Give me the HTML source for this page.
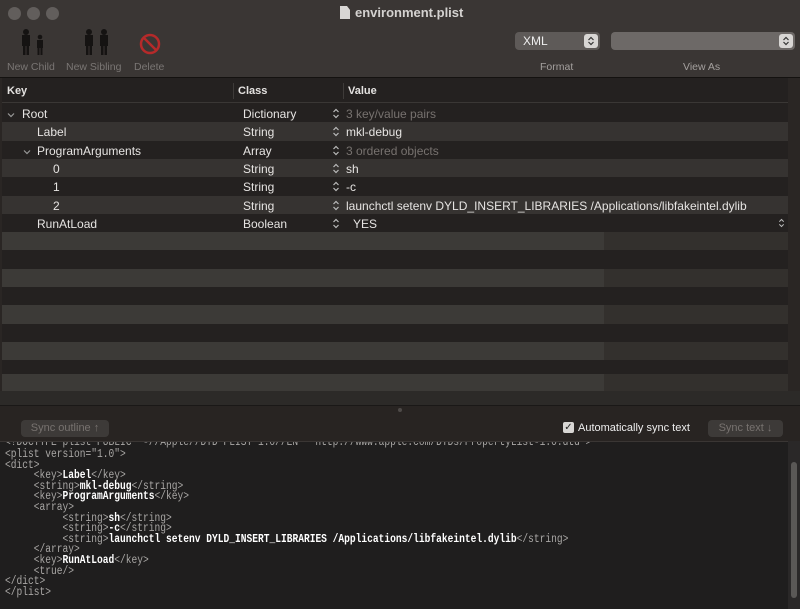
<!DOCTYPE html>
<html><head><meta charset="utf-8"><style>
*{margin:0;padding:0;box-sizing:border-box}
body{width:800px;height:609px;overflow:hidden;background:#2a2624;font-family:"Liberation Sans",sans-serif;color:#e6e4e2;position:relative}
.abs{position:absolute}
.top{left:0;top:0;width:800px;height:78px;background:#3a3634;border-bottom:1px solid #141210}
.dot{width:13px;height:13px;border-radius:50%;background:#625e5c;top:7px}
.lbl{font-size:10.5px;color:#7a7674;top:61px}
.tbl{left:2px;top:78px;width:786px;height:314px;background:#242120}
.hdr{left:2px;top:78px;width:786px;height:25px;background:#242120;border-bottom:1px solid #3a3735;font-size:11px;font-weight:bold;color:#e4e2e0}
.row{position:absolute;left:2px;width:786px;height:18.3px;font-size:12px}
.row span{position:absolute;top:3px}
.light{background:#363331}
.gray{color:#77726f}
.ud{position:absolute;left:330px;top:4px;width:8px;height:11px}
pre{font-family:"Liberation Mono",monospace;font-size:11.5px;line-height:10.6px;color:#a9a7a5;transform:scaleX(0.833);transform-origin:0 0;white-space:pre}
pre b{color:#fff;font-weight:bold}
.btn{background:#3d3a38;border-radius:4px;color:#77726f;font-size:11px;text-align:center;line-height:17px;height:17px}
</style></head><body>
<div class="abs top"></div>
<div class="abs dot" style="left:8px"></div>
<div class="abs dot" style="left:27px"></div>
<div class="abs dot" style="left:46px"></div>
<div class="abs" style="left:340px;top:6px;width:10px;height:13px;background:#d8d6d4;clip-path:polygon(0 0,70% 0,100% 30%,100% 100%,0 100%)"></div>
<div class="abs" style="left:355px;top:5px;font-size:13px;font-weight:bold;color:#d4d2d0">environment.plist</div>
<svg class="abs" style="left:15px;top:28px" width="160" height="32">
<g fill="#151312">
<circle cx="11" cy="4" r="3"/><rect x="7" y="7" width="8" height="11"/><rect x="8" y="17" width="2.5" height="10"/><rect x="11.5" y="17" width="2.5" height="10"/>
<circle cx="25" cy="9" r="2.3"/><rect x="22" y="12" width="6" height="8"/><rect x="22.5" y="19" width="2" height="8"/><rect x="25.5" y="19" width="2" height="8"/>
<circle cx="74" cy="4" r="3"/><rect x="70" y="7" width="8" height="11"/><rect x="71" y="17" width="2.5" height="10"/><rect x="74.5" y="17" width="2.5" height="10"/>
<circle cx="89" cy="4" r="3"/><rect x="85" y="7" width="8" height="11"/><rect x="86" y="17" width="2.5" height="10"/><rect x="89.5" y="17" width="2.5" height="10"/>
</g>
<circle cx="135" cy="16" r="9" fill="none" stroke="#b52a2a" stroke-width="2.5"/>
<line x1="129" y1="10" x2="141" y2="22" stroke="#b52a2a" stroke-width="2.5"/>
</svg>
<div class="abs lbl" style="left:7px">New Child</div>
<div class="abs lbl" style="left:66px">New Sibling</div>
<div class="abs lbl" style="left:134px">Delete</div>
<div class="abs" style="left:515px;top:32px;width:85px;height:18px;background:#5e5a58;border-radius:4px;font-size:12px;color:#eee;padding:2px 8px">XML</div>
<svg class="abs" style="left:584px;top:34px" width="14" height="14"><rect width="14" height="14" rx="3" fill="#d8d6d4"/><path d="M4.5 6 L7 3.5 L9.5 6 M4.5 8 L7 10.5 L9.5 8" fill="none" stroke="#333" stroke-width="1.2"/></svg>
<div class="abs" style="left:611px;top:32px;width:184px;height:18px;background:#6d6967;border-radius:4px"></div>
<svg class="abs" style="left:779px;top:34px" width="14" height="14"><rect width="14" height="14" rx="3" fill="#d8d6d4"/><path d="M4.5 6 L7 3.5 L9.5 6 M4.5 8 L7 10.5 L9.5 8" fill="none" stroke="#333" stroke-width="1.2"/></svg>
<div class="abs lbl" style="left:540px;color:#a4a09e">Format</div>
<div class="abs lbl" style="left:683px;color:#a4a09e">View As</div>

<div class="abs tbl"></div>
<div class="abs hdr">
<span class="abs" style="left:5px;top:7px">Key</span>
<div class="abs" style="left:231px;top:5px;width:1px;height:16px;background:#3e3b39"></div>
<span class="abs" style="left:236px;top:7px">Class</span>
<div class="abs" style="left:341px;top:5px;width:1px;height:16px;background:#3e3b39"></div>
<span class="abs" style="left:346px;top:7px">Value</span>
</div>
<svg width="0" height="0" style="position:absolute"><defs><symbol id="ud" viewBox="0 0 8 11"><path d="M1.5 4 L4 1.5 L6.5 4 M1.5 7 L4 9.5 L6.5 7" fill="none" stroke="#bbb" stroke-width="1.2"/></symbol><symbol id="chev" viewBox="0 0 8 6"><path d="M1 1.5 L4 4.5 L7 1.5" fill="none" stroke="#999" stroke-width="1.2"/></symbol></defs></svg>
<div class="row" style="top:104px"><svg style="position:absolute;left:5px;top:8px" width="8" height="6"><use href="#chev"/></svg><span style="left:20px">Root</span><span style="left:241px">Dictionary</span><svg class="ud"><use href="#ud"/></svg><span class="gray" style="left:344px">3 key/value pairs</span></div>
<div class="row light" style="top:122.3px"><span style="left:35px">Label</span><span style="left:241px">String</span><svg class="ud"><use href="#ud"/></svg><span style="left:344px">mkl-debug</span></div>
<div class="row" style="top:140.6px"><svg style="position:absolute;left:21px;top:8px" width="8" height="6"><use href="#chev"/></svg><span style="left:35px">ProgramArguments</span><span style="left:241px">Array</span><svg class="ud"><use href="#ud"/></svg><span class="gray" style="left:344px">3 ordered objects</span></div>
<div class="row light" style="top:158.9px"><span style="left:51px">0</span><span style="left:241px">String</span><svg class="ud"><use href="#ud"/></svg><span style="left:344px">sh</span></div>
<div class="row" style="top:177.2px"><span style="left:51px">1</span><span style="left:241px">String</span><svg class="ud"><use href="#ud"/></svg><span style="left:344px">-c</span></div>
<div class="row light" style="top:195.5px"><span style="left:51px">2</span><span style="left:241px">String</span><svg class="ud"><use href="#ud"/></svg><span style="left:344px">launchctl setenv DYLD_INSERT_LIBRARIES /Applications/libfakeintel.dylib</span></div>
<div class="row" style="top:213.8px"><span style="left:35px">RunAtLoad</span><span style="left:241px">Boolean</span><svg class="ud"><use href="#ud"/></svg><span style="left:351px">YES</span><svg style="position:absolute;left:776px;top:4px" width="7" height="10"><use href="#ud"/></svg></div>
<div class="row" style="top:232.1px;background:linear-gradient(90deg,#3c3a37 602px,#33302d 602px)"></div>
<div class="row" style="top:268.7px;background:linear-gradient(90deg,#3c3a37 602px,#33302d 602px)"></div>
<div class="row" style="top:305.3px;background:linear-gradient(90deg,#3c3a37 602px,#33302d 602px)"></div>
<div class="row" style="top:341.9px;background:linear-gradient(90deg,#3c3a37 602px,#33302d 602px)"></div>
<div class="row" style="top:373.5px;height:17.5px;background:linear-gradient(90deg,#3c3a37 602px,#33302d 602px)"></div>
<div class="abs" style="left:0;top:391px;width:800px;height:15px;background:#2c2a28;border-bottom:1px solid #1a1817"></div>
<div class="abs" style="left:0;top:406px;width:800px;height:35px;background:#282422"></div>
<div class="abs" style="left:398px;top:408px;width:4px;height:4px;border-radius:50%;background:#4e4a48"></div>
<div class="abs btn" style="left:21px;top:420px;width:88px">Sync outline ↑</div>
<div class="abs" style="left:563px;top:422px;width:11px;height:11px;background:#d8d6d4;border-radius:2px;color:#222;font-size:10px;line-height:11px;text-align:center">✓</div>
<div class="abs" style="left:578px;top:422px;font-size:11px;color:#eee">Automatically sync text</div>
<div class="abs btn" style="left:708px;top:420px;width:75px">Sync text ↓</div>
<div class="abs" style="left:0;top:441px;width:800px;height:168px;background:#1f1e1e;border-top:1px solid #3a3634"></div>
<div class="abs" style="left:788px;top:441px;width:12px;height:168px;background:#2a2828"></div>
<div class="abs" style="left:791px;top:462px;width:6px;height:136px;background:#5a5856;border-radius:3px"></div>
<div class="abs" style="left:5px;top:442px;overflow:hidden;height:6px;width:780px"><pre style="margin-top:-4px">&lt;!DOCTYPE plist PUBLIC "-//Apple//DTD PLIST 1.0//EN" "http://www.apple.com/DTDs/PropertyList-1.0.dtd"&gt;</pre></div>
<div class="abs" style="left:5px;top:450px"><pre>&lt;plist version="1.0"&gt;
&lt;dict&gt;
     &lt;key&gt;<b>Label</b>&lt;/key&gt;
     &lt;string&gt;<b>mkl-debug</b>&lt;/string&gt;
     &lt;key&gt;<b>ProgramArguments</b>&lt;/key&gt;
     &lt;array&gt;
          &lt;string&gt;<b>sh</b>&lt;/string&gt;
          &lt;string&gt;<b>-c</b>&lt;/string&gt;
          &lt;string&gt;<b>launchctl setenv DYLD_INSERT_LIBRARIES /Applications/libfakeintel.dylib</b>&lt;/string&gt;
     &lt;/array&gt;
     &lt;key&gt;<b>RunAtLoad</b>&lt;/key&gt;
     &lt;true/&gt;
&lt;/dict&gt;
&lt;/plist&gt;</pre></div>
</body></html>
